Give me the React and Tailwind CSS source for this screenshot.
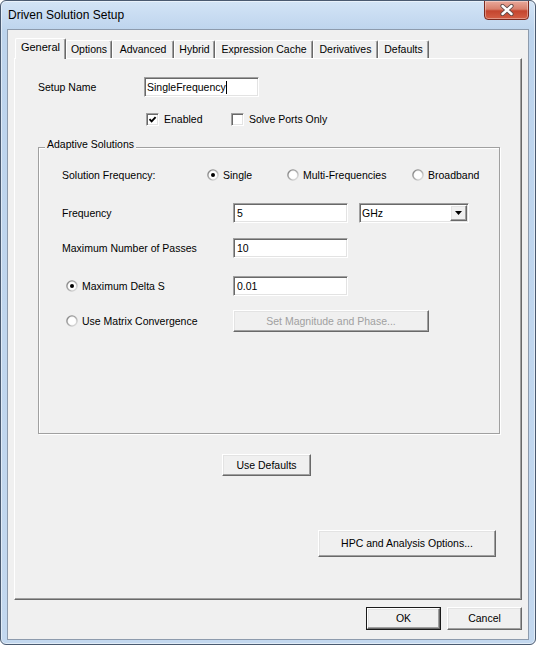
import React from "react";

const ui = "font-['Liberation_Sans',Arial,sans-serif] text-[10.5px] leading-[13px] text-black";

const sunken =
  "bg-white border border-t-[#a0a0a0] border-l-[#a0a0a0] border-b-white border-r-white shadow-[inset_1px_1px_0_#696969,inset_-1px_-1px_0_#e3e3e3]";

const raised =
  "bg-[#f0f0f0] border border-t-white border-l-white border-b-[#696969] border-r-[#696969] shadow-[inset_-1px_-1px_0_#a0a0a0,inset_1px_1px_0_#e3e3e3]";

function TextBox({ value, className = "", caret = false }) {
  return (
    <div className={`${sunken} flex items-center pl-[3px] ${className}`}>
      <span>{value}</span>
      {caret && <span className="w-px h-[13px] bg-black" />}
    </div>
  );
}

function Button({ children, className = "", disabled = false }) {
  return (
    <div className={`${raised} flex items-center justify-center ${disabled ? "text-[#a0a0a0]" : ""} ${className}`}>
      {children}
    </div>
  );
}

function CheckBox({ checked, label, className = "" }) {
  return (
    <div className={`flex items-center ${className}`}>
      <span className={`${sunken} w-[13px] h-[13px] flex items-center justify-center shrink-0`}>
        {checked && (
          <svg width="9" height="9" viewBox="0 0 9 9">
            <path d="M1.5 4.2 L3.6 6.3 L7.6 2.1" stroke="#000" strokeWidth="1.9" fill="none" />
          </svg>
        )}
      </span>
      <span className="ml-[5px]">{label}</span>
    </div>
  );
}

function Radio({ checked }) {
  return (
    <svg width="12" height="12" viewBox="0 0 12 12" className="shrink-0">
      <defs>
        <linearGradient id="radioRing" x1="0" y1="0" x2="1" y2="1">
          <stop offset="0" stopColor="#7a7a7a" />
          <stop offset="0.5" stopColor="#a9a9a9" />
          <stop offset="1" stopColor="#f2f2f2" />
        </linearGradient>
      </defs>
      <circle cx="6" cy="6" r="5.8" fill="url(#radioRing)" />
      <circle cx="6" cy="6" r="4.4" fill="#f7f7f7" />
      <circle cx="6" cy="6" r="3.6" fill="#fff" />
      {checked && <circle cx="6" cy="6" r="2" fill="#000" />}
    </svg>
  );
}

function RadioItem({ checked, label, className = "" }) {
  return (
    <div className={`flex items-center ${className}`}>
      <Radio checked={checked} />
      <span className="ml-[4px]">{label}</span>
    </div>
  );
}

const tabs = [
  { label: "General", w: "w-[51px]", active: true },
  { label: "Options", w: "w-[46px]" },
  { label: "Advanced", w: "w-[62px]" },
  { label: "Hybrid", w: "w-[41px]" },
  { label: "Expression Cache", w: "w-[98px]" },
  { label: "Derivatives", w: "w-[65px]" },
  { label: "Defaults", w: "w-[51px]" },
];

function Tab({ label, w, active }) {
  const base =
    "bg-[#f0f0f0] border-t border-l border-r border-t-white border-l-white border-r-[#696969] shadow-[inset_-1px_0_0_#a0a0a0] rounded-t-[2px] flex justify-center";
  return active ? (
    <div className={`${base} ${w} h-[21px] items-center pb-[3px] text-[11px]`}>{label}</div>
  ) : (
    <div className={`${base} ${w} h-[18px] mb-px items-center`}>{label}</div>
  );
}

function CloseButton() {
  return (
    <div className="w-[45px] h-[20px] -mt-px rounded-b-[4px] border border-[#7b2a1f] bg-[linear-gradient(to_bottom,#e9a99b,#d8806d_45%,#c4452e_55%,#d45f45)] shadow-[inset_0_0_0_1px_rgba(255,255,255,0.35)] flex items-center justify-center">
      <svg width="16" height="12" viewBox="0 0 16 12">
        <path d="M3.5 2 L12.5 10 M12.5 2 L3.5 10" stroke="#5e4a48" strokeWidth="4.2" strokeLinecap="round" />
        <path d="M3.5 2 L12.5 10 M12.5 2 L3.5 10" stroke="#fff" strokeWidth="2.4" strokeLinecap="round" />
      </svg>
    </div>
  );
}

export default function App() {
  return (
    <div className={`${ui} w-[536px] h-[645px] flex flex-col rounded-[6px] border border-[#4a5a70] bg-[linear-gradient(to_bottom,#d3e4f6,#bdd4ed_30px,#c3d8ef)] shadow-[inset_0_0_0_1px_rgba(255,255,255,0.5)] overflow-hidden`}>
      {/* title bar */}
      <div className="h-[28px] flex items-start justify-between shrink-0">
        <span className="pl-[7px] pt-[7px] text-[12px] leading-[14px]">Driven Solution Setup</span>
        <div className="mr-[6px]">
          <CloseButton />
        </div>
      </div>

      {/* client area */}
      <div className="flex-1 mx-[6px] mb-[4px] border border-[#8d9bad] bg-[#f0f0f0] pt-[8px] px-[6px] flex flex-col">
        <div className="ml-[1px] h-[21px] -mb-px relative z-10 flex items-end">
          {tabs.map((t) => (
            <Tab key={t.label} {...t} />
          ))}
        </div>

        <div className="w-[508px] h-[542px] border border-t-white border-l-white border-r-[#696969] border-b-[#696969] shadow-[inset_-1px_-1px_0_#a0a0a0] flex flex-col">
          <div className="mt-[18px] ml-[23px] h-[20px] flex items-center">
            <span className="w-[106px]">Setup Name</span>
            <TextBox value="SingleFrequency" caret className="w-[115px] h-[20px] !pl-[2px]" />
          </div>

          <div className="mt-[16px] ml-[131px] h-[13px] flex items-center">
            <CheckBox checked label="Enabled" className="w-[85px]" />
            <CheckBox checked={false} label="Solve Ports Only" />
          </div>

          <fieldset className="mt-[12px] ml-[23px] w-[462px] h-[296px] border border-[#a0a0a0] shadow-[inset_1px_1px_0_#fff,1px_1px_0_#fff]">
            <legend className="ml-[6px] px-[2px] pb-[6px] bg-[#f0f0f0]">Adaptive Solutions</legend>
            <div className="flex flex-col pl-[23px]">
              <div className="mt-[11px] h-[14px] flex items-center">
                <span className="w-[145px]">Solution Frequency:</span>
                <RadioItem checked label="Single" className="w-[80px]" />
                <RadioItem checked={false} label="Multi-Frequencies" className="w-[125px]" />
                <RadioItem checked={false} label="Broadband" />
              </div>

              <div className="mt-[21px] h-[20px] flex items-center">
                <span className="w-[171px]">Frequency</span>
                <TextBox value="5" className="w-[115px] h-[20px]" />
                <div className={`${sunken} ml-[11px] w-[110px] h-[20px] flex items-center justify-between pl-[2px] pr-px`}>
                  <span>GHz</span>
                  <div className={`${raised} w-[17px] h-[16px] flex items-center justify-center`}>
                    <svg width="7" height="4" viewBox="0 0 7 4">
                      <path d="M0 0 H7 L3.5 4 Z" fill="#000" />
                    </svg>
                  </div>
                </div>
              </div>

              <div className="mt-[15px] h-[20px] flex items-center">
                <span className="w-[171px]">Maximum Number of Passes</span>
                <TextBox value="10" className="w-[115px] h-[20px]" />
              </div>

              <div className="mt-[18px] h-[20px] flex items-center">
                <RadioItem checked label="Maximum Delta S" className="w-[171px] pl-[4px]" />
                <TextBox value="0.01" className="w-[115px] h-[20px]" />
              </div>

              <div className="mt-[14px] h-[22px] flex items-center">
                <RadioItem checked={false} label="Use Matrix Convergence" className="w-[171px] pl-[4px]" />
                <Button disabled className="w-[196px] h-[22px]">
                  Set Magnitude and Phase...
                </Button>
              </div>
            </div>
          </fieldset>

          <Button className="mt-[20px] ml-[207px] w-[89px] h-[22px]">Use Defaults</Button>

          <Button className="mt-[54px] ml-[303px] w-[178px] h-[27px]">HPC and Analysis Options...</Button>
        </div>

        <div className="mt-[7px] flex justify-end gap-[6px]">
          <div className="w-[75px] h-[23px] border border-[#1a1a1a] flex">
            <Button className="flex-1">OK</Button>
          </div>
          <Button className="w-[75px] h-[23px]">Cancel</Button>
        </div>
      </div>
    </div>
  );
}
